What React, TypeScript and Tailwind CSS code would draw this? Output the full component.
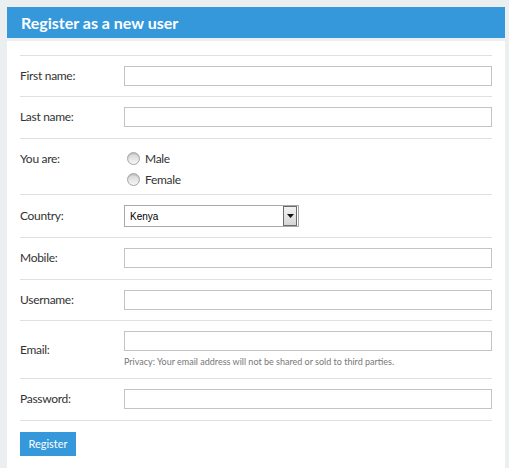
import React from "react";

const font = { fontFamily: "Lato, 'Open Sans', sans-serif" };

function Row({ label, children, tall, extra }: { label: string; children: React.ReactNode; tall?: boolean; extra?: boolean }) {
  return (
    <div className={`flex border-t border-[#e0e0e0] pt-[10px] ${extra ? "pb-[11px]" : "pb-[10px]"}`}>
      <div className={`w-[104px] shrink-0 text-[12px] tracking-[-0.3px] text-[#333] ${tall ? "pt-[1px]" : "self-center leading-[20px]"}`}>{label}</div>
      <div className="flex-1">{children}</div>
    </div>
  );
}

function TextInput() {
  return <input className="block h-[20px] w-full border border-[#c4c4c4] bg-white outline-none" />;
}

function Radio({ label }: { label: string }) {
  return (
    <label className="flex h-[19px] items-center gap-[5px] text-[12px] tracking-[-0.3px] text-[#333]">
      <span className="ml-[3px] h-[13px] w-[13px] rounded-full border border-[#a5a5a5] bg-gradient-to-b from-[#d4d4d4] to-[#f6f6f6] shadow-[inset_0_1px_1px_rgba(0,0,0,0.15)]" />
      {label}
    </label>
  );
}

export default function App() {
  return (
    <div className="min-h-[468px] bg-[#ecefef] pl-[7px] pr-[4px] pt-[7px]" style={font}>
      <div className="flex h-[31px] items-center bg-[#3498db] pl-[14px]">
        <h1 className="text-[16px] font-bold text-white">Register as a new user</h1>
      </div>
      <div className="mt-[3px] min-h-[427px] bg-white pl-[13px] pr-[13px] pt-[14px]">
        <Row label="First name:"><TextInput /></Row>
        <Row label="Last name:" extra><TextInput /></Row>
        <Row label="You are:" tall>
          <div className="mb-[-5px] flex flex-col gap-[2px]">
            <Radio label="Male" />
            <Radio label="Female" />
          </div>
        </Row>
        <Row label="Country:">
          <div className="flex h-[22px] w-[175px] items-center border border-[#a9a9a9] bg-white">
            <span className="flex-1 pl-[5px] text-[10px] text-black" style={{ fontFamily: "'Liberation Sans', Arial, sans-serif" }}>Kenya</span>
            <span className="mr-[1px] flex h-[20px] w-[14px] items-center justify-center border border-[#6b6b6b] bg-gradient-to-b from-[#f2f2f2] to-[#d6d6d6]">
              <svg width="7" height="4" viewBox="0 0 7 4"><path d="M0 0h7L3.5 4z" fill="#111" /></svg>
            </span>
          </div>
        </Row>
        <Row label="Mobile:" extra><TextInput /></Row>
        <Row label="Username:"><TextInput /></Row>
        <Row label="Email:">
          <TextInput />
          <p className="mt-[5px] text-[9px] leading-[12px] text-[#777]">Privacy: Your email address will not be shared or sold to third parties.</p>
        </Row>
        <div className="border-b border-[#e0e0e0]">
          <Row label="Password:" extra><TextInput /></Row>
        </div>
        <button className="mt-[11px] h-[24px] w-[56px] bg-[#3498db] text-[11px] text-white">Register</button>
      </div>
    </div>
  );
}
